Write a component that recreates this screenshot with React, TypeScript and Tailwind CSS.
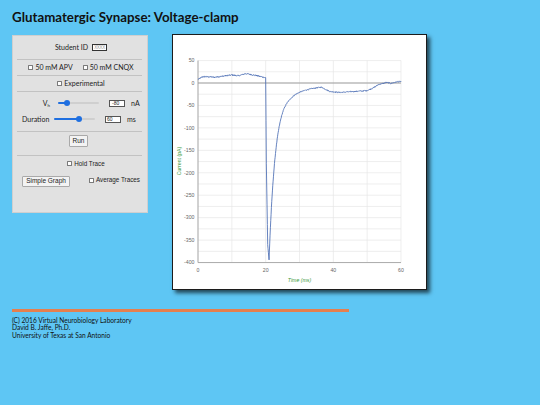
import React from 'react'

// plot geometry, in page pixels
const X0 = 198
const X1 = 401
const Y_ZERO = 83
const PX_PER_PA = 202 / 450
const xOf = (t: number) => X0 + t * ((X1 - X0) / 60)
const yOf = (v: number) => Y_ZERO - v * PX_PER_PA

function interp(pts: number[][], t: number) {
  if (t <= pts[0][0]) return pts[0][1]
  for (let i = 1; i < pts.length; i++) {
    const [ta, va] = pts[i - 1]
    const [tb, vb] = pts[i]
    if (t <= tb) return va + ((t - ta) / (tb - ta)) * (vb - va)
  }
  return pts[pts.length - 1][1]
}

function buildTrace() {
  const base = [[0, 8], [1.4, 14], [5, 13], [8, 16], [10, 18], [12, 16], [14, 21], [17, 17], [19.9, 12]]
  const drop = [[20, 12], [20.2, -180], [20.6, -360], [21, -394]]
  const slow = [
    [21, -28], [25, -24], [27, -24], [30, -18], [33, -13], [36.4, -9], [39, -19], [42, -21],
    [46, -19], [50, -17], [52, -10], [53.2, -4], [55.8, 1.5], [57, -1], [59, 3], [60, 3],
  ]
  let seed = 12345
  const rand = () => {
    seed = (seed * 1103515245 + 12345) % 2147483648
    return seed / 2147483648
  }
  const out: string[] = []
  for (let i = 0; i <= 600; i++) {
    const t = i / 10
    let v: number
    if (t < 20) v = interp(base, t) + (rand() - 0.5) * 3
    else if (t <= 21) v = interp(drop, t)
    else v = (-394 - interp(slow, 21)) * Math.exp(-(t - 21) / 1.85) + interp(slow, t) + (rand() - 0.5) * 2.4
    out.push(`${xOf(t).toFixed(2)},${yOf(v).toFixed(2)}`)
  }
  return out.join(' ')
}

const trace = buildTrace()

function Chart() {
  const hLines = Array.from({ length: 19 }, (_, i) => 50 - i * 25)
  const vLines = [0, 10, 20, 30, 40, 50, 60]
  const yLabels = [50, 0, -50, -100, -150, -200, -250, -300, -350, -400]
  const font = '"Liberation Sans", Arial, sans-serif'
  return (
    <svg width={253} height={254} viewBox="173 35 253 254" className="block">
      <rect x={173} y={35} width={253} height={254} fill="#ffffff" />
      {hLines.map((v) => (
        <line key={v} x1={X0} x2={X1} y1={yOf(v)} y2={yOf(v)} stroke="#e6e6e6" strokeWidth={0.7} />
      ))}
      {vLines.map((t) => (
        <line key={t} x1={xOf(t)} x2={xOf(t)} y1={yOf(50)} y2={yOf(-400)} stroke="#e6e6e6" strokeWidth={0.7} />
      ))}
      <line x1={X0} x2={X1} y1={Y_ZERO} y2={Y_ZERO} stroke="#8a8a8a" strokeWidth={0.8} />
      <line x1={X0} x2={X0} y1={yOf(50)} y2={yOf(-400)} stroke="#9a9a9a" strokeWidth={0.8} />
      <line x1={X0} x2={X1} y1={yOf(-400)} y2={yOf(-400)} stroke="#9a9a9a" strokeWidth={0.8} />
      {yLabels.map((v) => (
        <text key={v} x={194.5} y={yOf(v) + 1.8} textAnchor="end" fontSize={5.2} fill="#666666" fontFamily={font}>
          {v}
        </text>
      ))}
      {[0, 20, 40, 60].map((t) => (
        <text key={t} x={xOf(t)} y={271.5} textAnchor="middle" fontSize={5.2} fill="#666666" fontFamily={font}>
          {t}
        </text>
      ))}
      <text
        x={0}
        y={0}
        transform="translate(180.5 161) rotate(-90)"
        textAnchor="middle"
        fontSize={5.2}
        fill="#3c9a3c"
        fontFamily={font}
      >
        Current (pA)
      </text>
      <text x={299.5} y={281.5} textAnchor="middle" fontSize={5.2} fontStyle="italic" fill="#3c9a3c" fontFamily={font}>
        Time (ms)
      </text>
      <polyline points={trace} fill="none" stroke="#4a6db3" strokeWidth={0.85} strokeLinejoin="round" />
    </svg>
  )
}

function Checkbox() {
  return <span className="inline-block w-[5px] h-[5px] bg-white border-[0.5px] border-[#7a7a7a] rounded-[0.5px] mr-[2px] shrink-0" />
}

function Slider({ pct, className }: { pct: number; className: string }) {
  return (
    <div className={`relative h-[6px] ${className}`}>
      <div className="absolute left-0 right-0 top-[2px] h-[2px] rounded-full bg-[#cfcfcf]" />
      <div className="absolute left-0 top-[2px] h-[2px] rounded-full bg-[#1f6fe0]" style={{ width: `${pct}%` }} />
      <div
        className="absolute top-0 w-[6px] h-[6px] -ml-[3px] rounded-full bg-[#1f6fe0]"
        style={{ left: `${pct}%` }}
      />
    </div>
  )
}

function Divider() {
  return <div className="ml-[4px] w-[125px] h-px bg-[#c2c2c2]" />
}

function ControlPanel() {
  return (
    <div className="mt-px w-[136px] h-[178px] bg-[#e1e1e1] border border-[#cfcfcf] flex flex-col font-['Lato',sans-serif] text-[7px] text-[#222]">
      <div className="mt-[5px] h-[12px] flex items-center justify-center pl-[2px]">
        <span>Student ID</span>
        <span className="ml-[4px] w-[15px] h-[7px] border border-[#333] bg-white overflow-hidden text-center text-[4.5px] leading-[5px] text-[#999] tracking-[-0.3px] font-['Liberation_Sans',Arial,sans-serif]">
          XXXX
        </span>
      </div>
      <div className="mt-[6px]">
        <Divider />
      </div>
      <div className="h-[15px] flex items-center justify-center pl-[2px]">
        <Checkbox />
        <span>50 mM APV</span>
        <span className="w-[10px]" />
        <Checkbox />
        <span>50 mM CNQX</span>
      </div>
      <Divider />
      <div className="h-[15px] flex items-center justify-center pl-[2px]">
        <Checkbox />
        <span>Experimental</span>
      </div>
      <Divider />
      <div className="mt-[4px] h-[14px] flex items-center">
        <span className="w-[37px] text-right">
          V<sub className="text-[4.5px]">h</sub>
        </span>
        <Slider pct={22} className="ml-[8px] w-[41px]" />
        <span className="ml-[10px] w-[16px] h-[7px] border border-[#555] bg-white text-[5px] leading-[5px] pl-[2px] font-['Liberation_Sans',Arial,sans-serif]">
          -80
        </span>
        <span className="ml-[6px]">nA</span>
      </div>
      <div className="mt-[2px] h-[14px] flex items-center">
        <span className="ml-[9px] w-[27px]">Duration</span>
        <Slider pct={60} className="ml-[5px] w-[41px]" />
        <span className="ml-[10px] w-[16px] h-[7px] border border-[#555] bg-white text-[5px] leading-[5px] pl-[1px] font-['Liberation_Sans',Arial,sans-serif]">
          60
        </span>
        <span className="ml-[6px]">ms</span>
      </div>
      <div className="mt-[5px]">
        <Divider />
      </div>
      <div className="h-[18px] flex items-center justify-center pr-[3px]">
        <button className="w-[19px] h-[12px] bg-[#f3f3f3] border border-[#a9a9a9] rounded-[1px] font-['Liberation_Sans',Arial,sans-serif] text-[6.5px] leading-none">
          Run
        </button>
      </div>
      <div className="mt-[5px]">
        <Divider />
      </div>
      <div className="h-[15px] flex items-center justify-center pl-[12px] font-['Liberation_Sans',Arial,sans-serif] text-[6.3px]">
        <Checkbox />
        <span>Hold Trace</span>
      </div>
      <div className="mt-[3px] h-[14px] flex items-center font-['Liberation_Sans',Arial,sans-serif] text-[6.3px]">
        <button className="ml-[9px] w-[48px] h-[11px] bg-[#f3f3f3] border border-[#a9a9a9] rounded-[1px] text-[6.5px] leading-none">
          Simple Graph
        </button>
        <span className="ml-[19px] flex items-center -mt-[2px]">
          <Checkbox />
          <span>Average Traces</span>
        </span>
      </div>
    </div>
  )
}

export default function App() {
  return (
    <div className="min-h-[405px] w-[540px] bg-[#5ec6f4] pl-[12px] pt-[9px] font-['Lato',sans-serif]">
      <h1 className="text-[13.3px] leading-[17px] font-bold text-[#111]">Glutamatergic Synapse: Voltage-clamp</h1>
      <div className="mt-[8px] flex items-start gap-[24px]">
        <ControlPanel />
        <div className="border border-[#1c1c1c] bg-white shadow-[3px_3px_4px_rgba(0,0,0,0.65)]">
          <Chart />
        </div>
      </div>
      <div className="mt-[19px] w-[337px] h-[2.5px] bg-[#e57f4e]" />
      <div className="mt-[5px] text-[6.6px] leading-[7.7px] text-[#111]">
        <div>(C) 2016 Virtual Neurobiology Laboratory</div>
        <div>David B. Jaffe, Ph.D.</div>
        <div>University of Texas at San Antonio</div>
      </div>
    </div>
  )
}
